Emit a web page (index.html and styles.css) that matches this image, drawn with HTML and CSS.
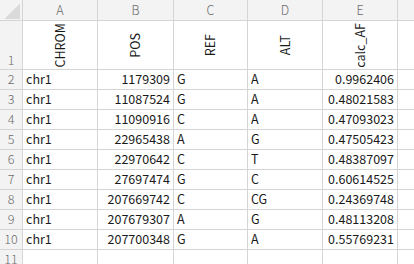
FILE: index.html
```html
<!DOCTYPE html>
<html>
<head>
<meta charset="utf-8">
<link rel="stylesheet" href="styles.css">
</head>
<body>
<div class="sheet">
  <div class="hdr corner"><div class="tri"></div></div>
  <div class="hdr col">A</div>
  <div class="hdr col">B</div>
  <div class="hdr col">C</div>
  <div class="hdr col">D</div>
  <div class="hdr col">E</div>
  <div class="hdr col"></div>

  <div class="hdr rn rn-tall">1</div>
  <div class="cell head"><span class="vt">CHROM</span></div>
  <div class="cell head"><span class="vt">POS</span></div>
  <div class="cell head"><span class="vt">REF</span></div>
  <div class="cell head"><span class="vt">ALT</span></div>
  <div class="cell head"><span class="vt">calc_AF</span></div>
  <div class="cell"></div>

  <div class="hdr rn">2</div><div class="cell">chr1</div><div class="cell num">1179309</div><div class="cell">G</div><div class="cell">A</div><div class="cell num">0.9962406</div><div class="cell"></div>
  <div class="hdr rn">3</div><div class="cell">chr1</div><div class="cell num">11087524</div><div class="cell">G</div><div class="cell">A</div><div class="cell num">0.48021583</div><div class="cell"></div>
  <div class="hdr rn">4</div><div class="cell">chr1</div><div class="cell num">11090916</div><div class="cell">C</div><div class="cell">A</div><div class="cell num">0.47093023</div><div class="cell"></div>
  <div class="hdr rn">5</div><div class="cell">chr1</div><div class="cell num">22965438</div><div class="cell">A</div><div class="cell">G</div><div class="cell num">0.47505423</div><div class="cell"></div>
  <div class="hdr rn">6</div><div class="cell">chr1</div><div class="cell num">22970642</div><div class="cell">C</div><div class="cell">T</div><div class="cell num">0.48387097</div><div class="cell"></div>
  <div class="hdr rn">7</div><div class="cell">chr1</div><div class="cell num">27697474</div><div class="cell">G</div><div class="cell">C</div><div class="cell num">0.60614525</div><div class="cell"></div>
  <div class="hdr rn">8</div><div class="cell">chr1</div><div class="cell num">207669742</div><div class="cell">C</div><div class="cell">CG</div><div class="cell num">0.24369748</div><div class="cell"></div>
  <div class="hdr rn">9</div><div class="cell">chr1</div><div class="cell num">207679307</div><div class="cell">A</div><div class="cell">G</div><div class="cell num">0.48113208</div><div class="cell"></div>
  <div class="hdr rn">10</div><div class="cell">chr1</div><div class="cell num">207700348</div><div class="cell">G</div><div class="cell">A</div><div class="cell num">0.55769231</div><div class="cell"></div>
  <div class="hdr rn">11</div><div class="cell"></div><div class="cell"></div><div class="cell"></div><div class="cell"></div><div class="cell"></div><div class="cell"></div>
</div>
</body>
</html>
```

FILE: styles.css
```css
html, body {
  margin: 0;
  padding: 0;
  background: #ffffff;
  overflow: hidden;
}

.sheet {
  display: grid;
  grid-template-columns: 22px 74px 75px 73px 74px 74px 1fr;
  grid-template-rows: 20px 48px repeat(9, 19px) 19px;
  gap: 1px;
  background: #d5d5d5;
  width: 414px;
  height: 264px;
  overflow: hidden;
  font-family: "Noto Sans CJK JP", "Liberation Sans", sans-serif;
  font-size: 12.5px;
  color: #1a1a1a;
}

.hdr {
  background: #f3f3f3;
  color: #6b6b6b;
  font-size: 12.5px;
  font-weight: 300;
}

.corner {
  display: flex;
  justify-content: flex-end;
  align-items: flex-end;
  padding: 0 2px 1px 0;
}

.tri {
  width: 15px;
  height: 15px;
  background: linear-gradient(to bottom right, transparent 50%, #dadada 50%);
}

.col {
  display: flex;
  align-items: center;
  justify-content: center;
  line-height: 1;
}

.rn {
  display: flex;
  align-items: center;
  justify-content: center;
  line-height: 1;
}

.rn-tall {
  align-items: flex-end;
  padding-bottom: 3px;
}

.cell {
  background: #ffffff;
  display: flex;
  align-items: center;
  padding: 0 3px;
  line-height: 1;
  white-space: nowrap;
  overflow: hidden;
}

.num {
  justify-content: flex-end;
}

.head {
  justify-content: center;
}

.vt {
  writing-mode: vertical-rl;
  transform: rotate(180deg);
  line-height: 1;
  color: #1a1a1a;
}
```
